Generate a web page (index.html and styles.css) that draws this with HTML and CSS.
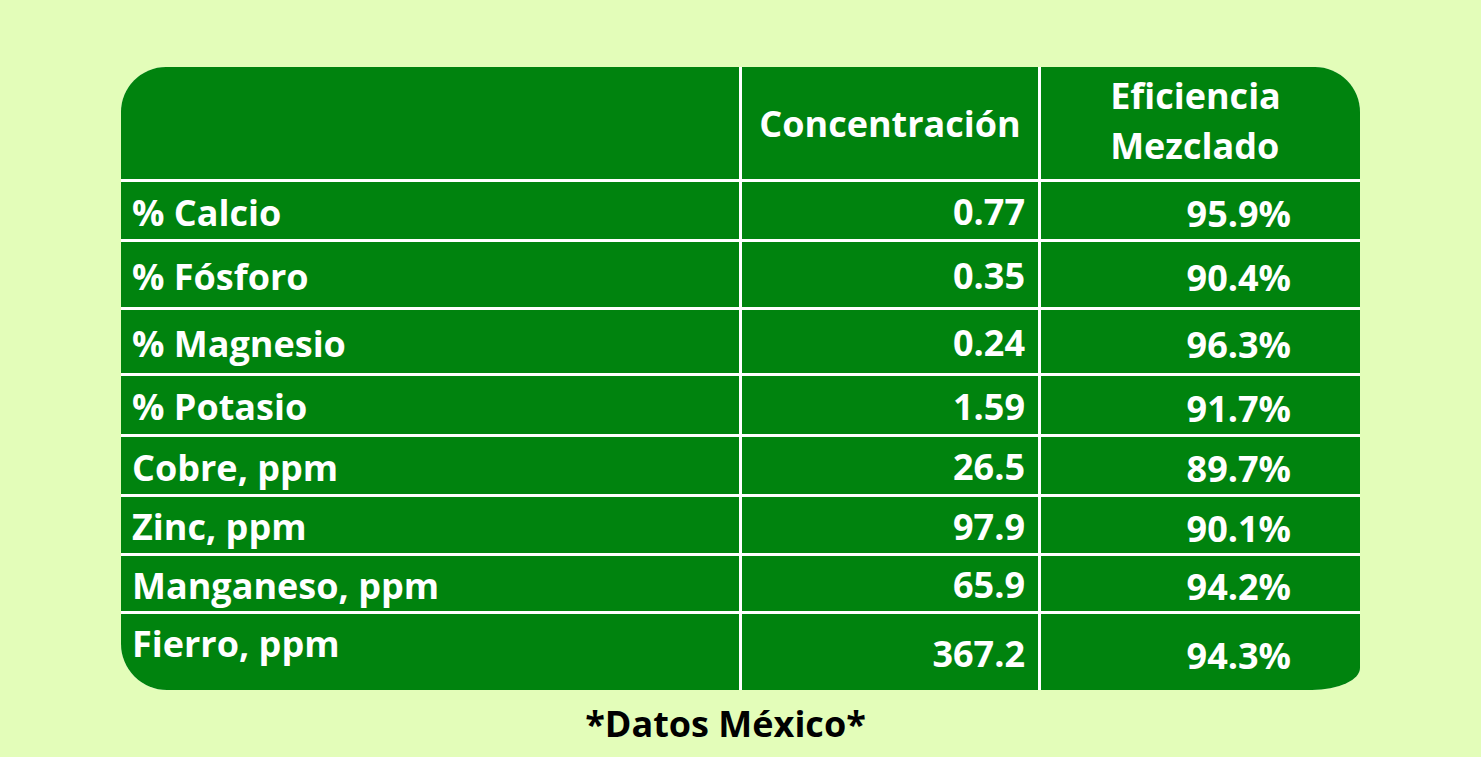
FILE: index.html
```html
<!DOCTYPE html>
<html>
<head>
  <link rel="stylesheet" href="styles.css">
</head>
<body>

<div class="page">
  <div class="table">
    <div class="cell head"></div>
    <div class="cell head center">Concentración</div>
    <div class="cell head center eff-head"><span class="stack">Eficiencia<br>Mezclado</span></div>

    <div class="cell name">% Calcio</div>
    <div class="cell conc">0.77</div>
    <div class="cell eff">95.9%</div>

    <div class="cell name">% Fósforo</div>
    <div class="cell conc">0.35</div>
    <div class="cell eff">90.4%</div>

    <div class="cell name">% Magnesio</div>
    <div class="cell conc">0.24</div>
    <div class="cell eff">96.3%</div>

    <div class="cell name">% Potasio</div>
    <div class="cell conc">1.59</div>
    <div class="cell eff">91.7%</div>

    <div class="cell name">Cobre, ppm</div>
    <div class="cell conc">26.5</div>
    <div class="cell eff">89.7%</div>

    <div class="cell name">Zinc, ppm</div>
    <div class="cell conc">97.9</div>
    <div class="cell eff">90.1%</div>

    <div class="cell name">Manganeso, ppm</div>
    <div class="cell conc">65.9</div>
    <div class="cell eff">94.2%</div>

    <div class="cell name last">Fierro, ppm</div>
    <div class="cell conc">367.2</div>
    <div class="cell eff">94.3%</div>
  </div>

  <p class="note">*Datos México*</p>
</div>

</body>
</html>
```

FILE: styles.css
```css
body {
  margin: 0;
  background-color: #e3fdb9;
  font-family: "Open Sans", "Noto Sans", sans-serif;
  font-weight: 700;
}

.page {
  padding: 67px 0 0 121px;
  width: 1239px;
}

.table {
  display: grid;
  grid-template-columns: 618px 296px 319px;
  grid-template-rows: 112px 57px 65px 63px 58px 57px 56px 55px 76px;
  gap: 3px;
  background-color: #ffffff;
  border-radius: 45px 45px 48px 46px / 45px 45px 22px 46px;
  overflow: hidden;
}

.cell {
  background-color: #00830e;
  color: #ffffff;
  font-size: 36px;
  display: flex;
  align-items: center;
}

.head.center {
  justify-content: center;
}

.eff-head {
  padding-right: 10px;
}

.stack {
  line-height: 50px;
  padding-bottom: 4px;
}

.name {
  padding-left: 11px;
  padding-top: 3px;
}

.name.last {
  padding-top: 0;
  padding-bottom: 18px;
}

.conc {
  justify-content: flex-end;
  padding-right: 13px;
  padding-top: 2px;
}

.eff {
  justify-content: flex-end;
  padding-right: 69px;
  padding-top: 6px;
}

.note {
  margin: 9px 0 0;
  padding-right: 30px;
  text-align: center;
  font-size: 36px;
  color: #000000;
}
```
